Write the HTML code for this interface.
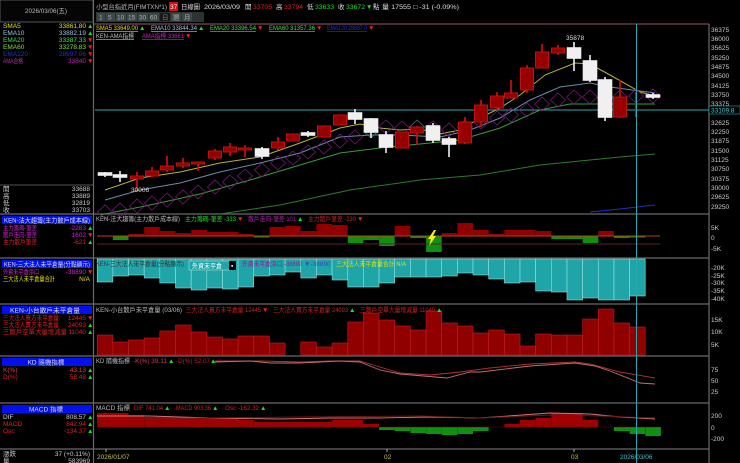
<!DOCTYPE html>
<html><head><meta charset="utf-8"><style>
html,body{margin:0;padding:0;background:#000;width:740px;height:463px;overflow:hidden}
svg{display:block}
text{font-family:"Liberation Sans","Noto Sans CJK TC",sans-serif;font-size:6.5px}
</style></head><body>
<svg width="740" height="463" viewBox="0 0 740 463">
<rect width="740" height="463" fill="#000"/>
<!-- left panel -->
<rect x="0" y="0" width="93" height="22" fill="#050505" stroke="#555" stroke-width="1"/>
<text x="25" y="13" fill="#bbb" textLength="42" lengthAdjust="spacingAndGlyphs">2026/03/06(五)</text>
<g font-size="6">
<text x="3" y="28" fill="#e0e000">SMA5</text><text x="86" y="28" fill="#e0e000" text-anchor="end">33861.80</text><text x="87" y="28" fill="#2d2">▲</text>
<text x="3" y="35" fill="#a0c0e0">EMA10</text><text x="86" y="35" fill="#a0c0e0" text-anchor="end">33882.19</text><text x="87" y="35" fill="#2d2">▲</text>
<text x="3" y="42" fill="#40e040">EMA20</text><text x="86" y="42" fill="#40e040" text-anchor="end">33387.33</text><text x="87" y="42" fill="#e22">▼</text>
<text x="3" y="49" fill="#80e040">EMA60</text><text x="86" y="49" fill="#80e040" text-anchor="end">33278.83</text><text x="87" y="49" fill="#e22">▼</text>
<text x="3" y="56" fill="#2030e0">EMA120</text><text x="86" y="56" fill="#2030e0" text-anchor="end">28697.06</text><text x="87" y="56" fill="#e22">▼</text>
<text x="3" y="63" fill="#c020c0" textLength="20" lengthAdjust="spacingAndGlyphs">AMA合格</text><text x="86" y="63" fill="#c020c0" text-anchor="end">33840</text><text x="87" y="63" fill="#e22">▼</text>
<line x1="0" y1="185" x2="93" y2="185" stroke="#555"/>
<text x="3" y="191" fill="#ccc">開</text><text x="90" y="191" fill="#ccc" text-anchor="end">33688</text>
<text x="3" y="198" fill="#ccc">高</text><text x="90" y="198" fill="#ccc" text-anchor="end">33889</text>
<text x="3" y="205" fill="#ccc">低</text><text x="90" y="205" fill="#ccc" text-anchor="end">32819</text>
<text x="3" y="212" fill="#ccc">收</text><text x="90" y="212" fill="#ccc" text-anchor="end">33703</text>

<rect x="2" y="216" width="90" height="8" fill="#0010f0"/>
<text x="4" y="222.5" fill="#ddd" textLength="86" lengthAdjust="spacingAndGlyphs">KEN-法大趨籌(主力散戶成本線)</text>
<text x="3" y="230" fill="#d020d0" textLength="34" lengthAdjust="spacingAndGlyphs">主力籌碼-筆差</text><text x="86" y="230" fill="#d020d0" text-anchor="end">-2283</text><text x="87" y="230" fill="#2d2">▲</text>
<text x="3" y="237" fill="#d020d0" textLength="34" lengthAdjust="spacingAndGlyphs">散戶走向-筆差</text><text x="86" y="237" fill="#d020d0" text-anchor="end">1602</text><text x="87" y="237" fill="#e22">▼</text>
<text x="3" y="244" fill="#e02020" textLength="34" lengthAdjust="spacingAndGlyphs">主力散戶筆差</text><text x="86" y="244" fill="#e02020" text-anchor="end">-621</text><text x="87" y="244" fill="#2d2">▲</text>

<rect x="2" y="260" width="90" height="8" fill="#0010f0"/>
<text x="4" y="266.5" fill="#ddd" textLength="86" lengthAdjust="spacingAndGlyphs">KEN-三大法人未平倉量(分點顯示)</text>
<text x="3" y="274" fill="#d020d0" textLength="36" lengthAdjust="spacingAndGlyphs">外資未平倉淨口</text><text x="86" y="274" fill="#d020d0" text-anchor="end">-38890</text><text x="87" y="274" fill="#e22">▼</text>
<text x="3" y="281" fill="#e0e000" textLength="52" lengthAdjust="spacingAndGlyphs">三大法人未平倉量合計</text><text x="90" y="281" fill="#e0e000" text-anchor="end">N/A</text>

<rect x="2" y="306" width="90" height="8" fill="#0010f0"/>
<text x="10" y="312.5" fill="#ddd" textLength="70" lengthAdjust="spacingAndGlyphs">KEN-小台散戶未平倉量</text>
<text x="3" y="320" fill="#e02020" textLength="56" lengthAdjust="spacingAndGlyphs">三大法人買方未平倉量</text><text x="86" y="320" fill="#e02020" text-anchor="end">12445</text><text x="87" y="320" fill="#e22">▼</text>
<text x="3" y="327" fill="#e02020" textLength="56" lengthAdjust="spacingAndGlyphs">三大法人賣方未平倉量</text><text x="86" y="327" fill="#e02020" text-anchor="end">24093</text><text x="87" y="327" fill="#2d2">▲</text>
<text x="3" y="334" fill="#e02020" textLength="64" lengthAdjust="spacingAndGlyphs">三散戶空單大量增減量</text><text x="86" y="334" fill="#e02020" text-anchor="end">11040</text><text x="87" y="334" fill="#2d2">▲</text>

<rect x="2" y="358" width="90" height="8" fill="#0010f0"/>
<text x="46" y="364.5" fill="#ddd" text-anchor="middle">KD 隨機指標</text>
<text x="3" y="372" fill="#e04040">K(%)</text><text x="86" y="372" fill="#e04040" text-anchor="end">43.13</text><text x="87" y="372" fill="#2d2">▲</text>
<text x="3" y="379" fill="#e02020">D(%)</text><text x="86" y="379" fill="#e02020" text-anchor="end">58.48</text><text x="87" y="379" fill="#2d2">▲</text>

<rect x="2" y="405" width="90" height="8" fill="#0010f0"/>
<text x="46" y="411.5" fill="#ddd" text-anchor="middle">MACD 指標</text>
<text x="3" y="419" fill="#ccc">DIF</text><text x="86" y="419" fill="#ccc" text-anchor="end">808.57</text><text x="87" y="419" fill="#2d2">▲</text>
<text x="3" y="426" fill="#e02020">MACD</text><text x="86" y="426" fill="#e02020" text-anchor="end">842.94</text><text x="87" y="426" fill="#2d2">▲</text>
<text x="3" y="433" fill="#e02020">Osc</text><text x="86" y="433" fill="#e02020" text-anchor="end">-134.37</text><text x="87" y="433" fill="#2d2">▲</text>

<text x="3" y="456" fill="#ccc">漲跌</text><text x="90" y="456" fill="#ccc" text-anchor="end">37 (+0.11%)</text>
<text x="3" y="463" fill="#ccc">量</text><text x="90" y="463" fill="#ccc" text-anchor="end">583969</text>
</g>

<!-- panel separators -->
<g stroke="#6a6a6a" stroke-width="1.2">
<line x1="0" y1="214" x2="709" y2="214"/>
<line x1="0" y1="258" x2="709" y2="258"/>
<line x1="0" y1="304" x2="709" y2="304"/>
<line x1="0" y1="356" x2="709" y2="356"/>
<line x1="0" y1="403" x2="709" y2="403"/>
<line x1="0" y1="449" x2="709" y2="449"/>
<line x1="93.5" y1="0" x2="93.5" y2="463"/>
<line x1="709" y1="24" x2="709" y2="463"/>
</g>
<line x1="94" y1="24" x2="709" y2="24" stroke="#7a4a5a" stroke-width="1.2"/>

<!-- header -->
<text x="96" y="9" fill="#bbb" textLength="71" lengthAdjust="spacingAndGlyphs">小型台指近月(FIMTXN*1)</text>
<rect x="169" y="2" width="9" height="9" fill="#d01010"/><text x="170" y="9" fill="#fff" font-size="6">37</text>
<text x="181" y="9" fill="#ddd" textLength="19" lengthAdjust="spacingAndGlyphs">日線圖</text>
<text x="204" y="9" fill="#ddd" textLength="36" lengthAdjust="spacingAndGlyphs">2026/03/09</text>
<text x="245" y="9" fill="#ddd">開</text><text x="253" y="9" fill="#e02020" textLength="19" lengthAdjust="spacingAndGlyphs">33705</text>
<text x="276" y="9" fill="#ddd">高</text><text x="284" y="9" fill="#e02020" textLength="19" lengthAdjust="spacingAndGlyphs">33794</text>
<text x="307" y="9" fill="#ddd">低</text><text x="315" y="9" fill="#2d2" textLength="19" lengthAdjust="spacingAndGlyphs">33633</text>
<text x="338" y="9" fill="#ddd">收</text><text x="346" y="9" fill="#2d2" textLength="19" lengthAdjust="spacingAndGlyphs">33672</text><text x="366" y="9" fill="#2d2">▼</text>
<text x="373" y="9" fill="#ddd">點</text>
<text x="382" y="9" fill="#ddd" textLength="77" lengthAdjust="spacingAndGlyphs">量 17555 □ -31 (-0.09%)</text>
<g font-size="6.5">
<rect x="96" y="12" width="108" height="10" fill="#2a3434"/>
<g fill="#3a4848"><rect x="97" y="13" width="8" height="8"/><rect x="106" y="13" width="9" height="8"/><rect x="116" y="13" width="10" height="8"/><rect x="127" y="13" width="10" height="8"/><rect x="138" y="13" width="10" height="8"/><rect x="149" y="13" width="10" height="8"/><rect x="171" y="13" width="10" height="8"/><rect x="182" y="13" width="10" height="8"/></g>
<rect x="160" y="13" width="10" height="8" fill="#181818"/>
<text x="99" y="19.5" fill="#aaa">1</text><text x="108" y="19.5" fill="#aaa">5</text><text x="117" y="19.5" fill="#aaa">10</text><text x="128" y="19.5" fill="#aaa">15</text><text x="139" y="19.5" fill="#aaa">30</text><text x="150" y="19.5" fill="#aaa">60</text><text x="162" y="19.5" fill="#777">日</text><text x="173" y="19.5" fill="#aaa">週</text><text x="184" y="19.5" fill="#aaa">月</text>
</g>

<!-- main indicator labels -->
<g font-size="6">
<text x="96" y="30" fill="#e0e000" text-decoration="underline" textLength="42" lengthAdjust="spacingAndGlyphs">SMA5 33649.00</text><text x="139" y="30" fill="#2d2">▲</text>
<text x="151" y="30" fill="#a0c0e0" text-decoration="underline" textLength="46" lengthAdjust="spacingAndGlyphs">EMA10 33844.34</text><text x="198" y="30" fill="#2d2">▲</text>
<text x="210" y="30" fill="#40e040" text-decoration="underline" textLength="46" lengthAdjust="spacingAndGlyphs">EMA20 33396.54</text><text x="257" y="30" fill="#e22">▼</text>
<text x="269" y="30" fill="#40e040" text-decoration="underline" textLength="46" lengthAdjust="spacingAndGlyphs">EMA60 31357.36</text><text x="316" y="30" fill="#e22">▼</text>
<text x="327" y="30" fill="#2030e0" text-decoration="underline" textLength="40" lengthAdjust="spacingAndGlyphs">EMA120 28697.0</text><text x="368" y="30" fill="#e22">▼</text>
<text x="96" y="38" fill="#bbb" text-decoration="underline" textLength="38" lengthAdjust="spacingAndGlyphs">KEN-AMA指標</text>
<text x="142" y="38" fill="#c020c0" text-decoration="underline" textLength="42" lengthAdjust="spacingAndGlyphs">AMA指標 33661</text><text x="185" y="38" fill="#e22">▼</text>
</g>

<!-- right axis -->
<g fill="#ccc" font-size="6.2">
<text x="711" y="32">36375</text><text x="711" y="41">36000</text><text x="711" y="50">35625</text><text x="711" y="60">35250</text><text x="711" y="69">34875</text><text x="711" y="78">34500</text><text x="711" y="88">34125</text><text x="711" y="97">33750</text><text x="711" y="106">33375</text><text x="711" y="125">32625</text><text x="711" y="134">32250</text><text x="711" y="143">31875</text><text x="711" y="153">31500</text><text x="711" y="162">31125</text><text x="711" y="171">30750</text><text x="711" y="181">30375</text><text x="711" y="190">30000</text><text x="711" y="199">29625</text><text x="711" y="209">29250</text>
<text x="711" y="230">5K</text><text x="711" y="240">0</text><text x="711" y="251">-5K</text>
<text x="711" y="270">-20K</text><text x="711" y="278">-25K</text><text x="711" y="285">-30K</text><text x="711" y="293">-35K</text><text x="711" y="301">-40K</text>
<text x="711" y="322">15K</text><text x="711" y="334">10K</text><text x="711" y="347">5K</text>
<text x="711" y="372">75</text><text x="711" y="383">50</text><text x="711" y="394">25</text>
<text x="711" y="418">200</text><text x="711" y="430">0</text><text x="711" y="441">-200</text>
</g>
<line x1="95" y1="110" x2="709" y2="110" stroke="#2aa8b0" stroke-width="1"/>
<rect x="709" y="106" width="31" height="8" fill="#000" stroke="#2aa8b0" stroke-width=".6"/>
<text x="711" y="112.5" fill="#40d0d8" font-size="6.2">33109.8</text>

<!-- MA lines -->
<g fill="none" stroke-width="1">
<polyline stroke="#2030c0" points="590,212 620,209 655,205"/>
<polyline stroke="#2f7a2f" points="220,214 280,205 350,190 420,180 480,175 540,165 580,161 620,157 655,154"/>
<polyline stroke="#3a9a3a" points="100,215 150,205 200,194 250,180 300,165 340,153 380,148 420,144 460,140 500,128 540,110 570,104 600,104 630,104 655,104"/>
<polyline stroke="#6a8aa8" points="105,200 140,190 180,183 220,172 260,163 300,153 340,137 370,135 400,135 440,137 470,130 500,118 530,100 560,87 590,83 610,87 640,91 655,93"/>
<polyline stroke="#b8b040" points="105,190 140,178 180,172 220,163 260,157 300,143 340,128 360,124 380,128 400,130 420,129 440,134 460,130 480,118 500,108 520,95 545,75 575,63 590,64 610,75 640,92 655,96"/>
</g>
<!-- AMA diamonds -->
<g fill="none" stroke="#7a1a7a" stroke-width=".8">
<path d="M97.5 212l7.5-7 7.5 7-7.5 7zM112.5 210l7.5-7 7.5 7-7.5 7zM129.5 206l7.5-7 7.5 7-7.5 7zM144.5 203l7.5-7 7.5 7-7.5 7zM159.5 200l7.5-7 7.5 7-7.5 7zM175.5 197l7.5-7 7.5 7-7.5 7zM190.5 192l7.5-7 7.5 7-7.5 7zM207.5 187l7.5-7 7.5 7-7.5 7zM222.5 182l7.5-7 7.5 7-7.5 7zM237.5 176l7.5-7 7.5 7-7.5 7zM254.5 170l7.5-7 7.5 7-7.5 7zM270.5 163l7.5-7 7.5 7-7.5 7zM285.5 158l7.5-7 7.5 7-7.5 7zM300.5 152l7.5-7 7.5 7-7.5 7zM316.5 147l7.5-7 7.5 7-7.5 7zM332.5 141l7.5-7 7.5 7-7.5 7zM347.5 137l7.5-7 7.5 7-7.5 7zM378.5 127l7.5-7 7.5 7-7.5 7zM394.5 128l7.5-7 7.5 7-7.5 7zM425.5 128l7.5-7 7.5 7-7.5 7zM441.5 130l7.5-7 7.5 7-7.5 7zM457.5 127l7.5-7 7.5 7-7.5 7zM473.5 122l7.5-7 7.5 7-7.5 7zM489.5 118l7.5-7 7.5 7-7.5 7zM503.5 115l7.5-7 7.5 7-7.5 7zM519.5 110l7.5-7 7.5 7-7.5 7zM534.5 104l7.5-7 7.5 7-7.5 7zM550.5 100l7.5-7 7.5 7-7.5 7zM566.5 97l7.5-7 7.5 7-7.5 7zM582.5 97l7.5-7 7.5 7-7.5 7zM612.5 97l7.5-7 7.5 7-7.5 7zM628.5 96l7.5-7 7.5 7-7.5 7zM645.5 96l7.5-7 7.5 7-7.5 7z"/>
</g>
<g fill="none" stroke="#208888" stroke-width=".8">
<path d="M363.5 131l7.5-7 7.5 7-7.5 7zM409.5 127l7.5-7 7.5 7-7.5 7zM597.5 98l7.5-7 7.5 7-7.5 7z"/>
</g>
<!-- candles -->
<g stroke-width="1.6">
<g stroke="#f0f0f0" fill="#f0f0f0">
<line x1="105" y1="172" x2="105" y2="177"/><rect x="98.5" y="173" width="13" height="2"/>
<line x1="120" y1="171" x2="120" y2="182"/><rect x="113.5" y="175" width="13" height="2"/>
<line x1="262" y1="147" x2="262" y2="159"/><rect x="255.5" y="149" width="13" height="7"/>
<line x1="308" y1="131" x2="308" y2="137"/><rect x="301.5" y="133" width="13" height="2"/>
<line x1="355" y1="109" x2="355" y2="124"/><rect x="348.5" y="113" width="13" height="6"/>
<line x1="371" y1="118" x2="371" y2="138"/><rect x="364.5" y="119" width="13" height="13"/>
<line x1="386" y1="131" x2="386" y2="153"/><rect x="379.5" y="135" width="13" height="12"/>
<line x1="433" y1="123" x2="433" y2="143"/><rect x="426.5" y="126" width="13" height="14"/>
<line x1="449" y1="137" x2="449" y2="157"/><rect x="442.5" y="139" width="13" height="5"/>
<line x1="574" y1="42" x2="574" y2="71"/><rect x="567.5" y="48" width="13" height="10"/>
<line x1="590" y1="55" x2="590" y2="82"/><rect x="583.5" y="61" width="13" height="19"/>
<line x1="605" y1="77" x2="605" y2="121"/><rect x="598.5" y="80" width="13" height="37"/>
<line x1="653" y1="93" x2="653" y2="99"/><rect x="646.5" y="95" width="13" height="2"/>
</g>
<g stroke="#c01010" fill="#980000" stroke-width="1">
<line x1="137" y1="172" x2="137" y2="190" stroke-width="1.8"/><rect x="130.5" y="176" width="13" height="3"/>
<line x1="152" y1="167" x2="152" y2="177" stroke-width="1.8"/><rect x="145.5" y="171" width="13" height="5"/>
<line x1="167" y1="156" x2="167" y2="172" stroke-width="1.8"/><rect x="160.5" y="166" width="13" height="4"/>
<line x1="183" y1="158" x2="183" y2="168" stroke-width="1.8"/><rect x="176.5" y="163" width="13" height="3"/>
<line x1="198" y1="162" x2="198" y2="171" stroke-width="1.8"/><rect x="191.5" y="162" width="13" height="2"/>
<line x1="215" y1="149" x2="215" y2="160" stroke-width="1.8"/><rect x="208.5" y="151" width="13" height="7"/>
<line x1="230" y1="143" x2="230" y2="156" stroke-width="1.8"/><rect x="223.5" y="147" width="13" height="5"/>
<line x1="245" y1="145" x2="245" y2="157" stroke-width="1.8"/><rect x="238.5" y="148" width="13" height="2"/>
<line x1="278" y1="137" x2="278" y2="150" stroke-width="1.8"/><rect x="271.5" y="142" width="13" height="6"/>
<rect x="286.5" y="134" width="13" height="7"/>
<rect x="317.5" y="126" width="13" height="11"/>
<rect x="333.5" y="115" width="13" height="10"/>
<rect x="395.5" y="132" width="13" height="16"/>
<line x1="417" y1="126" x2="417" y2="145" stroke-width="1.8"/><rect x="410.5" y="127" width="13" height="6"/>
<line x1="465" y1="117" x2="465" y2="144" stroke-width="1.8"/><rect x="458.5" y="122" width="13" height="21"/>
<line x1="481" y1="100" x2="481" y2="127" stroke-width="1.8"/><rect x="474.5" y="105" width="13" height="17"/>
<line x1="497" y1="92" x2="497" y2="110" stroke-width="1.8"/><rect x="490.5" y="96" width="13" height="12"/>
<line x1="511" y1="80" x2="511" y2="98" stroke-width="1.8"/><rect x="504.5" y="93" width="13" height="5"/>
<line x1="527" y1="65" x2="527" y2="93" stroke-width="1.8"/><rect x="520.5" y="68" width="13" height="22"/>
<line x1="542" y1="44" x2="542" y2="68" stroke-width="1.8"/><rect x="535.5" y="52" width="13" height="16"/>
<line x1="558" y1="45" x2="558" y2="55" stroke-width="1.8"/><rect x="551.5" y="48" width="13" height="5"/>
<line x1="620" y1="80" x2="620" y2="118" stroke-width="1.8"/><rect x="613.5" y="97" width="13" height="20"/>
<line x1="636" y1="92" x2="636" y2="117" stroke-width="2"/>
</g>
</g>
<text x="131" y="192" fill="#ddd" font-size="6">30006</text>
<text x="566" y="40" fill="#ddd" font-size="6">35878</text>

<!-- panel 2 -->
<text x="96" y="221" fill="#bbb" font-size="6" textLength="84" lengthAdjust="spacingAndGlyphs">KEN-法大趨籌(主力散戶成本線)</text>
<text x="185" y="221" fill="#2d2" font-size="6" textLength="51" lengthAdjust="spacingAndGlyphs">主力籌碼-筆差 -333</text><text x="237" y="221" fill="#e22" font-size="6">▼</text>
<text x="248" y="221" fill="#b020b0" font-size="6" textLength="48" lengthAdjust="spacingAndGlyphs">散戶走向-筆差 101</text><text x="297" y="221" fill="#2d2" font-size="6">▲</text>
<text x="308" y="221" fill="#d02020" font-size="6" textLength="48" lengthAdjust="spacingAndGlyphs">主力散戶筆差 -230</text><text x="357" y="221" fill="#e22" font-size="6">▼</text>
<g fill="#900000">
<rect x="128.5" y="234" width="15.6" height="2"/>
<rect x="144.2" y="227" width="15.6" height="9"/><rect x="159.8" y="231" width="15.6" height="5"/><rect x="175.5" y="233" width="15.6" height="3"/><rect x="191.2" y="230" width="15.6" height="6"/><rect x="206.8" y="232" width="15.6" height="4"/><rect x="222.5" y="232" width="15.6" height="4"/><rect x="238.1" y="234" width="15.6" height="2"/>
<rect x="269.5" y="227" width="15.6" height="9"/><rect x="285.1" y="226" width="15.6" height="10"/><rect x="300.8" y="231" width="15.6" height="5"/><rect x="316.4" y="224" width="15.6" height="12"/><rect x="332.1" y="225" width="15.6" height="11"/>
<rect x="394.7" y="226" width="15.6" height="10"/><rect x="441.7" y="233" width="15.6" height="3"/><rect x="457.4" y="223" width="15.6" height="13"/><rect x="473.0" y="230" width="15.6" height="6"/><rect x="488.7" y="234" width="15.6" height="2"/><rect x="504.4" y="230" width="15.6" height="6"/><rect x="520.0" y="230" width="15.6" height="6"/><rect x="535.7" y="231" width="15.6" height="5"/><rect x="598.3" y="231" width="15.6" height="5"/>
</g>
<g fill="#109010">
<rect x="112.9" y="236" width="15.6" height="4"/><rect x="253.8" y="236" width="15.6" height="1.5"/><rect x="347.8" y="236" width="15.6" height="7"/><rect x="363.4" y="236" width="15.6" height="4"/><rect x="379.1" y="236" width="15.6" height="10"/><rect x="410.4" y="236" width="15.6" height="2"/><rect x="426.1" y="236" width="15.6" height="16"/><rect x="551.3" y="236" width="15.6" height="3"/><rect x="567.0" y="236" width="15.6" height="3"/><rect x="582.7" y="236" width="15.6" height="7"/><rect x="614.0" y="236" width="15.6" height="2"/><rect x="629.6" y="236" width="15.6" height="1.5"/>
</g>
<line x1="97" y1="236" x2="660" y2="236" stroke="#c04010" stroke-width="1"/>
<line x1="97" y1="244" x2="660" y2="244" stroke="#602030" stroke-width="1"/>
<path d="M434 230l-6 9h3l-2 7 7-10h-3l3-6z" fill="#f0f020"/>

<!-- panel 3 teal -->
<g fill="#1fa5a8" stroke="#8fe0e0" stroke-width=".6">
<rect x="97.2" y="259" width="15.6" height="23"/><rect x="112.9" y="259" width="15.6" height="17"/><rect x="128.5" y="259" width="15.6" height="16"/><rect x="144.2" y="259" width="15.6" height="19"/><rect x="159.8" y="259" width="15.6" height="24"/><rect x="175.5" y="259" width="15.6" height="29"/><rect x="191.2" y="259" width="15.6" height="31"/><rect x="206.8" y="259" width="15.6" height="29"/><rect x="222.5" y="259" width="15.6" height="30"/><rect x="238.1" y="259" width="15.6" height="28"/><rect x="253.8" y="259" width="15.6" height="17"/><rect x="269.5" y="259" width="15.6" height="16"/><rect x="285.1" y="259" width="15.6" height="13"/><rect x="300.8" y="259" width="15.6" height="19"/><rect x="316.4" y="259" width="15.6" height="16"/><rect x="332.1" y="259" width="15.6" height="21"/><rect x="347.8" y="259" width="15.6" height="28"/><rect x="363.4" y="259" width="15.6" height="28"/><rect x="379.1" y="259" width="15.6" height="24"/><rect x="394.7" y="259" width="15.6" height="18"/><rect x="410.4" y="259" width="15.6" height="18"/><rect x="426.1" y="259" width="15.6" height="18"/><rect x="441.7" y="259" width="15.6" height="17"/><rect x="457.4" y="259" width="15.6" height="14"/><rect x="473.0" y="259" width="15.6" height="16"/><rect x="488.7" y="259" width="15.6" height="20"/><rect x="504.4" y="259" width="15.6" height="24"/><rect x="520.0" y="259" width="15.6" height="23"/><rect x="535.7" y="259" width="15.6" height="32"/><rect x="551.3" y="259" width="15.6" height="33"/><rect x="567.0" y="259" width="15.6" height="41"/><rect x="582.7" y="259" width="15.6" height="39"/><rect x="598.3" y="259" width="15.6" height="41"/><rect x="614.0" y="259" width="15.6" height="41"/><rect x="629.6" y="259" width="15.6" height="37"/>
</g>
<text x="96" y="266" fill="#333" font-size="6" textLength="88" lengthAdjust="spacingAndGlyphs">KEN-三大法人未平倉量(分點顯示)</text>
<rect x="189" y="261" width="41" height="9" fill="#1fa5a8" stroke="#bfe8e8" stroke-width=".5"/>
<text x="192" y="268" fill="#fff" font-size="6" textLength="30" lengthAdjust="spacingAndGlyphs">外資未平倉</text>
<rect x="229" y="261" width="7" height="9" fill="#000"/><text x="231" y="268" fill="#fff" font-size="6">▪</text>
<text x="242" y="266" fill="#a010a0" font-size="6" textLength="60" lengthAdjust="spacingAndGlyphs">外資未平倉淨口 -38890</text><text x="304" y="266" fill="#4040d0" font-size="6">▼-38890</text>
<text x="336" y="266" fill="#e0e000" font-size="6" textLength="70" lengthAdjust="spacingAndGlyphs">三大法人未平倉量合計 N/A</text>

<!-- panel 4 red -->
<g fill="#900000" stroke="#c02020" stroke-width=".6">
<rect x="97.2" y="335" width="15.6" height="20"/><rect x="112.9" y="342" width="15.6" height="13"/><rect x="128.5" y="340" width="15.6" height="15"/><rect x="144.2" y="338" width="15.6" height="17"/><rect x="159.8" y="331" width="15.6" height="24"/><rect x="175.5" y="325" width="15.6" height="30"/><rect x="191.2" y="332" width="15.6" height="23"/><rect x="206.8" y="337" width="15.6" height="18"/><rect x="222.5" y="339" width="15.6" height="16"/><rect x="238.1" y="336" width="15.6" height="19"/><rect x="253.8" y="336" width="15.6" height="19"/><rect x="269.5" y="343" width="15.6" height="12"/><rect x="300.8" y="342" width="15.6" height="13"/><rect x="316.4" y="347" width="15.6" height="8"/><rect x="332.1" y="343" width="15.6" height="12"/><rect x="347.8" y="322" width="15.6" height="33"/><rect x="363.4" y="313" width="15.6" height="42"/><rect x="379.1" y="320" width="15.6" height="35"/><rect x="394.7" y="326" width="15.6" height="29"/><rect x="410.4" y="330" width="15.6" height="25"/><rect x="426.1" y="311" width="15.6" height="44"/><rect x="441.7" y="323" width="15.6" height="32"/><rect x="457.4" y="326" width="15.6" height="29"/><rect x="473.0" y="333" width="15.6" height="22"/><rect x="488.7" y="330" width="15.6" height="25"/><rect x="504.4" y="334" width="15.6" height="21"/><rect x="520.0" y="346" width="15.6" height="9"/><rect x="535.7" y="334" width="15.6" height="21"/><rect x="551.3" y="335" width="15.6" height="20"/><rect x="567.0" y="335" width="15.6" height="20"/><rect x="582.7" y="319" width="15.6" height="36"/><rect x="598.3" y="309" width="15.6" height="46"/><rect x="614.0" y="323" width="15.6" height="32"/><rect x="629.6" y="327" width="15.6" height="28"/>
</g>
<text x="96" y="312" fill="#bbb" font-size="6" textLength="86" lengthAdjust="spacingAndGlyphs">KEN-小台散戶未平倉量 (03/06)</text>
<text x="186" y="312" fill="#d02020" font-size="6" textLength="75" lengthAdjust="spacingAndGlyphs">三大法人買方未平倉量 12445</text><text x="262" y="312" fill="#e22" font-size="6">▼</text>
<text x="273" y="312" fill="#d02020" font-size="6" textLength="75" lengthAdjust="spacingAndGlyphs">三大法人賣方未平倉量 24093</text><text x="349" y="312" fill="#2d2" font-size="6">▲</text>
<text x="360" y="312" fill="#d02020" font-size="6" textLength="75" lengthAdjust="spacingAndGlyphs">三散戶空單大量增減量 11040</text><text x="436" y="312" fill="#2d2" font-size="6">▲</text>

<!-- KD -->
<text x="96" y="363" fill="#bbb" font-size="6" textLength="34" lengthAdjust="spacingAndGlyphs">KD 隨機指標</text>
<text x="133" y="363" fill="#d04040" font-size="6" textLength="34" lengthAdjust="spacingAndGlyphs">-K(%) 39.11</text><text x="168" y="363" fill="#2d2" font-size="6">▲</text>
<text x="176" y="363" fill="#c02020" font-size="6" textLength="34" lengthAdjust="spacingAndGlyphs">-D(%) 52.07</text><text x="210" y="363" fill="#2d2" font-size="6">▲</text>
<g fill="none" stroke-width=".9">
<polyline stroke="#b03030" points="215,361 260,361 300,362 330,361 360,361 380,367 400,373 430,375 460,372 490,368 530,364 575,362 590,364 620,372 655,378"/>
<polyline stroke="#c07070" points="215,362 250,361 270,363 300,363 340,361 360,362 380,370 400,374 447,378 470,372 480,372 530,366 575,363 595,366 610,371 640,383 655,384"/>
</g>

<!-- MACD -->
<text x="96" y="410" fill="#bbb" font-size="6" textLength="34" lengthAdjust="spacingAndGlyphs">MACD 指標</text>
<text x="134" y="410" fill="#d02020" font-size="6" textLength="29" lengthAdjust="spacingAndGlyphs">DIF 741.04</text><text x="164" y="410" fill="#2d2" font-size="6">▲</text>
<text x="176" y="410" fill="#d02020" font-size="6" textLength="35" lengthAdjust="spacingAndGlyphs">MACD 903.36</text><text x="212" y="410" fill="#2d2" font-size="6">▲</text>
<text x="225" y="410" fill="#d02020" font-size="6" textLength="34" lengthAdjust="spacingAndGlyphs">Osc -162.32</text><text x="260" y="410" fill="#2d2" font-size="6">▲</text>
<g fill="#a00000">
<rect x="97.2" y="413" width="31.3" height="14"/><rect x="128.5" y="415" width="15.6" height="12"/><rect x="144.2" y="417" width="62.6" height="10"/><rect x="206.8" y="418" width="31.3" height="9"/><rect x="238.1" y="420" width="15.6" height="7"/><rect x="253.8" y="422" width="78.3" height="5"/><rect x="332.1" y="420" width="31.3" height="7"/><rect x="363.4" y="424" width="15.6" height="3"/>
<rect x="504.4" y="424" width="15.6" height="3"/><rect x="520.0" y="420" width="15.6" height="7"/><rect x="535.7" y="418" width="15.6" height="9"/><rect x="551.3" y="413" width="31.4" height="14"/><rect x="582.7" y="420" width="15.6" height="7"/>
</g>
<g fill="#109010">
<rect x="379.1" y="427" width="15.6" height="3"/><rect x="394.7" y="427" width="15.6" height="4"/><rect x="410.4" y="427" width="15.6" height="6"/><rect x="426.1" y="427" width="15.6" height="7"/><rect x="441.7" y="427" width="15.6" height="8"/><rect x="457.4" y="427" width="15.6" height="7"/><rect x="473.0" y="427" width="15.6" height="4"/><rect x="614.0" y="427" width="15.6" height="4"/><rect x="629.6" y="427" width="15.6" height="7"/><rect x="645.3" y="427" width="15.6" height="9"/>
</g>
<g fill="none" stroke-width=".9">
<polyline stroke="#e07070" points="97,416 150,416 210,418 280,419 330,418 380,418 430,417 480,418 550,413 590,414 620,417 655,419"/>
<polyline stroke="#701818" points="97,420 200,418 300,417 420,416 480,418 550,415 600,416 655,418"/>
</g>
<line x1="97" y1="427" x2="660" y2="427" stroke="#601010" stroke-width=".6"/>

<!-- date axis -->
<line x1="106" y1="449" x2="106" y2="452" stroke="#aaa"/>
<line x1="387" y1="449" x2="387" y2="452" stroke="#aaa"/>
<line x1="574" y1="449" x2="574" y2="452" stroke="#aaa"/>
<text x="97" y="459" fill="#c8c040" font-size="6.2">2026/01/07</text>
<text x="384" y="459" fill="#c8c040" font-size="6.2">02</text>
<text x="571" y="459" fill="#c8c040" font-size="6.2">03</text>
<text x="620" y="459" fill="#40c0d0" font-size="6.2">2026/03/06</text>

<!-- crosshair vertical -->
<line x1="636.5" y1="24" x2="636.5" y2="463" stroke="#2aa8b0" stroke-width="1"/>
</svg>
</body></html>
